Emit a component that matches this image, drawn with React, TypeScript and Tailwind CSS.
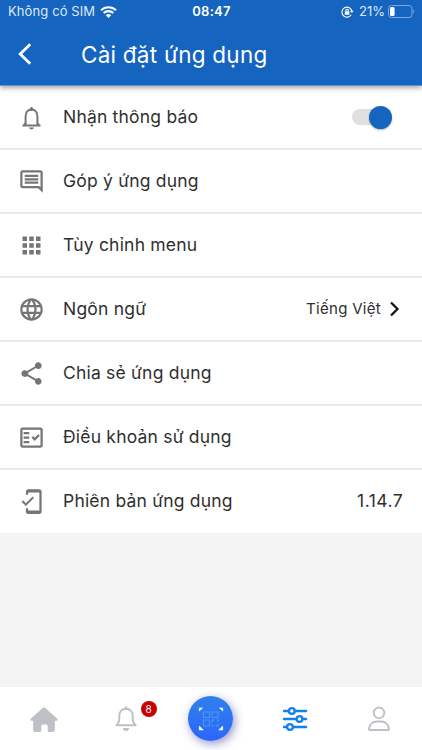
import type { ReactNode } from 'react'
import {
  MdApps,
  MdLanguage,
  MdMobileFriendly,
  MdOutlineComment,
  MdOutlineFactCheck,
  MdShare,
} from 'react-icons/md'

function StatusBar() {
  return (
    <div className="grid h-6 grid-cols-3 items-center pr-[7px] pl-2 text-[13px] text-[#dce9f8]">
      <div className="flex items-center gap-[5px]">
        <span className="whitespace-nowrap tracking-[0.1px]">Không có SIM</span>
        <svg width="17" height="12" viewBox="0 0 17 12" fill="none" stroke="#fff" strokeWidth="2.1">
          <path d="M1 4.3a10.6 10.6 0 0 1 15 0" />
          <path d="M3.7 7.1a6.8 6.8 0 0 1 9.6 0" />
          <path d="M8.5 12 5.8 9.3a3.8 3.8 0 0 1 5.4 0Z" fill="#fff" stroke="none" />
        </svg>
      </div>
      <div className="text-center font-semibold tracking-[0.3px] text-white">08:47</div>
      <div className="flex items-center justify-end">
        <svg className="mr-[5px]" width="13" height="12" viewBox="0 0 13 12" fill="none" stroke="#fff" strokeWidth="1.1">
          <path d="M10.2 8.8A5 5 0 1 1 10.8 5" />
          <path d="m9 4.8 1.9 2.3 1.8-2.3Z" fill="#fff" stroke="none" />
          <rect x="3.8" y="5.3" width="4.6" height="3.4" rx="0.5" fill="#fff" stroke="none" />
          <path d="M4.8 5.5V4.6a1.3 1.3 0 0 1 2.6 0v.9" />
        </svg>
        <span className="mr-[3px]">21%</span>
        <svg className="-mt-[2px]" width="27" height="13" viewBox="0 0 27 13" fill="none">
          <rect x="0.5" y="0.5" width="23.5" height="12" rx="3" stroke="#7ea9de" />
          <rect x="2" y="2" width="4.6" height="9" rx="1.5" fill="#fff" />
          <path d="M25.3 4.5c1.3.6 1.3 3.4 0 4Z" fill="#7ea9de" />
        </svg>
      </div>
    </div>
  )
}

function Header() {
  return (
    <header className="relative z-10 -mb-px h-[86px] border-b border-[#5c93d3] bg-[#1565c0] shadow-[0_2px_5px_rgba(0,0,0,0.35)]">
      <StatusBar />
      <div className="flex h-[61px] items-center pl-[18px]">
        <svg className="-mt-px" width="14" height="22" viewBox="0 0 14 22" fill="none" stroke="#fff" strokeWidth="2.8">
          <path d="M12.2 1.3 2.2 11l10 9.7" />
        </svg>
        <h1 className="ml-[49px] text-[22.5px] tracking-[0.25px] text-white">Cài đặt ứng dụng</h1>
      </div>
    </header>
  )
}

function BellIcon() {
  return (
    <svg width="27" height="27" viewBox="0 0 27 27" fill="none" stroke="currentColor" strokeWidth="2">
      <path d="M4.500 21.500h18" />
      <path d="M7.600 21.500V12.500c0-4.200 2.300-7 5.900-7s5.900 2.800 5.900 7v9" />
      <path d="M13.500 4.400v1" strokeWidth="3" strokeLinecap="round" />
      <path d="M5 20.500l2.600-2.500v3ZM22 20.500l-2.600-2.500v3Z" fill="currentColor" stroke="none" />
      <path d="M11 23.600h5a2.500 1.800 0 0 1-5 0Z" fill="currentColor" stroke="none" />
    </svg>
  )
}

function Toggle() {
  return (
    <div className="mr-[11px] flex h-4 w-10 items-center justify-end rounded-full bg-[#e0e0e0]">
      <div className="h-[23px] w-[23px] shrink-0 rounded-full bg-[#1565c0] shadow-[0_1px_2px_rgba(0,0,0,0.3)]" />
    </div>
  )
}

type RowProps = { icon: ReactNode; label: string; children?: ReactNode }

function Row({ icon, label, children }: RowProps) {
  return (
    <li className="flex h-16 items-center border-y border-[#ebebeb] pr-[19px] pl-[18px] text-[#303030] first:border-t-white last:border-b-white">
      <span className="text-[27px] text-[#757575]">{icon}</span>
      <span className="ml-[18px] flex-1 pt-px text-[17.5px] tracking-[0.2px]">{label}</span>
      {children}
    </li>
  )
}

function TabBar() {
  return (
    <nav className="grid h-[63px] grid-cols-5 items-center justify-items-center bg-white">
      <svg className="mt-[2px] ml-[3px]" width="28" height="26" viewBox="0 0 28 26" fill="#bdc1c5">
        <path d="M13 .7a1.5 1.5 0 0 1 2 0l12.3 11.1c.9.9.5 1.9-.6 1.9h-1.9V23a2 2 0 0 1-2 2h-3.5a1.6 1.6 0 0 1-1.6-1.6V19a1.6 1.6 0 0 0-1.6-1.6h-3.2a1.6 1.6 0 0 0-1.6 1.6v4.4A1.6 1.6 0 0 1 9.7 25H5.2a2 2 0 0 1-2-2v-9.3H1.3c-1.1 0-1.5-1-.6-1.9Z" />
      </svg>
      <div className="relative mt-px mr-[2px]">
        <svg width="22" height="26" viewBox="0 0 22 26" fill="none" stroke="#bdc1c5" strokeWidth="1.9">
          <path d="M1.3 19.3c2-1.8 3-3.3 3-6.3V9.8c0-4.200 2.700-7.100 6.700-7.100s6.700 2.900 6.700 7.100V13c0 3 1 4.500 3 6.300Z" strokeLinejoin="round" />
          <path d="M11 1.500v1" strokeWidth="2.500" strokeLinecap="round" />
          <path d="M8 22h6a3 3 0 0 1-6 0Z" fill="#bdc1c5" stroke="none" />
        </svg>
        <span className="absolute -top-[5px] left-[26px] flex h-4 w-4 items-center justify-center rounded-full bg-[#c90000] text-[10px] text-white">
          8
        </span>
      </div>
      <div className="flex h-[45px] w-[45px] items-center justify-center rounded-full bg-gradient-to-b from-[#2f80ea] to-[#2d66fb] shadow-[2px_3px_10px_rgba(50,50,150,0.5)]">
        <svg width="26" height="26" viewBox="0 0 26 26" fill="none" stroke="#5592f7" strokeWidth="1.1">
          <path d="M1.300 5V2h3.200ZM21.500 2h3.200v3ZM1.300 20v4h4ZM24.700 20v4h-4Z" fill="#fff" stroke="#fff" strokeWidth="0.6" />
          <path d="M5.500 6h6v5.500h-6ZM14 6h6v5.500h-6ZM5.500 14h6v6h-6ZM14 16.500V14h2.500M18.500 14H20v2M20 18v2h-2.500M14 18.500V20h2" />
        </svg>
      </div>
      <svg width="26" height="26" viewBox="0 0 26 26" fill="none" stroke="#1580f0" strokeWidth="2.4" strokeLinecap="round">
        <path d="M2 5h4M13 5h11M2 13h12M21.500 13H24M2 21h2.500M11.500 21H24" />
        <circle cx="9.800" cy="5" r="2.900" />
        <circle cx="17.500" cy="13" r="2.900" />
        <circle cx="8" cy="21" r="2.900" />
      </svg>
      <svg className="mr-[2px]" width="24" height="26" viewBox="0 0 24 26" fill="none" stroke="#bdc1c5" strokeWidth="1.9">
        <circle cx="12" cy="6.800" r="5.300" />
        <path d="M2.700 24c-.5 0-.8-.3-.7-.8C2.300 18.800 5.500 15.500 9.500 15.500h5c4 0 7.200 3.300 7.500 7.700 0 .5-.2.8-.7.8Z" />
      </svg>
    </nav>
  )
}

export default function App() {
  return (
    <div className="flex h-[750px] w-[422px] flex-col overflow-hidden bg-[#f4f4f4] font-[Inter,'Liberation_Sans',sans-serif]">
      <Header />
      <ul className="bg-white">
        <Row icon={<BellIcon />} label="Nhận thông báo">
          <Toggle />
        </Row>
        <Row icon={<MdOutlineComment />} label="Góp ý ứng dụng" />
        <Row icon={<MdApps />} label="Tùy chỉnh menu" />
        <Row icon={<MdLanguage />} label="Ngôn ngữ">
          <span className="text-[15px] tracking-[0.3px]">Tiếng Việt</span>
          <svg className="mr-[3px] ml-2" width="11" height="16" viewBox="0 0 11 16" fill="none" stroke="#111" strokeWidth="2.2">
            <path d="m2 1.500 6.500 6.500L2 14.500" />
          </svg>
        </Row>
        <Row icon={<MdShare />} label="Chia sẻ ứng dụng" />
        <Row icon={<MdOutlineFactCheck />} label="Điều khoản sử dụng" />
        <Row icon={<MdMobileFriendly />} label="Phiên bản ứng dụng">
          <span className="pt-px text-[17.5px] tracking-[0.45px]">1.14.7</span>
        </Row>
      </ul>
      <div className="flex-1" />
      <TabBar />
    </div>
  )
}
